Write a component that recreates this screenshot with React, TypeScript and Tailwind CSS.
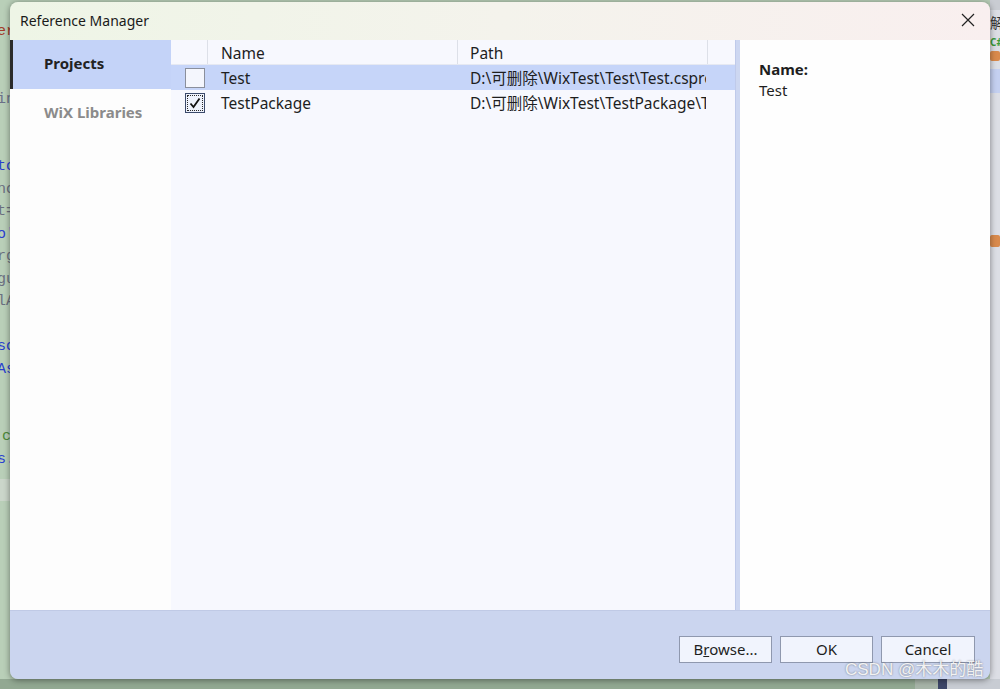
import React from "react";

const codeLines: { t: string; c: string; ml?: string }[] = [
  { t: "er", c: "text-[#a33a2a]" },
  { t: "", c: "" },
  { t: "", c: "" },
  { t: "in", c: "text-[#6b6f88]" },
  { t: "", c: "" },
  { t: "", c: "" },
  { t: "to", c: "text-[#2a3fd0]" },
  { t: "nc", c: "text-[#6b6f80]" },
  { t: "t=", c: "text-[#6b6f80]" },
  { t: "o'", c: "text-[#2a3fd0]" },
  { t: "rg", c: "text-[#6b6f80]" },
  { t: "gu", c: "text-[#6b6f80]" },
  { t: "lA", c: "text-[#6b6f80]" },
  { t: "", c: "" },
  { t: "sc", c: "text-[#2a3fd0]" },
  { t: "As", c: "text-[#2a3fd0]" },
  { t: "", c: "" },
  { t: "", c: "" },
  { t: "c", c: "text-[#4e8a3a]", ml: "ml-[5px]" },
  { t: "s.", c: "text-[#2a3fd0]" },
];

function Checkbox({ checked }: { checked?: boolean }) {
  if (checked) {
    return (
      <div className="w-[20px] h-[20px] border border-[#3b4a6b] bg-[#eef2fc] flex items-center justify-center">
        <div className="w-[16px] h-[16px] border border-dotted border-[#2a2a2a] flex items-center justify-center">
          <svg width="12" height="12" viewBox="0 0 12 12">
            <path d="M1.5 6.5 L4.5 10 L10.5 1.5" fill="none" stroke="#111" strokeWidth="1.8" />
          </svg>
        </div>
      </div>
    );
  }
  return <div className="w-[20px] h-[20px] border border-[#8a8f9c] bg-[#f4f6fd]" />;
}

export default function App() {
  const font = { fontFamily: '"Noto Sans", "Noto Sans CJK SC", sans-serif' };
  return (
    <div className="relative w-[1000px] h-[689px] overflow-hidden bg-[#b7cdb6]" style={font}>
      {/* background editor strip left */}
      <div className="absolute left-0 top-0 w-[10px] h-[689px] overflow-hidden bg-[#b9cfb8]">
        <div className="pt-[21px] font-['Liberation_Mono',monospace] text-[15px] leading-[22.5px] -ml-[3px]">
          {codeLines.map((l, i) => (
            <div key={i} className={`h-[22.5px] whitespace-nowrap ${l.c} ${l.ml ?? ""}`}>
              {l.t || "\u00a0"}
            </div>
          ))}
        </div>
        <div className="mt-[8px] h-[22px] bg-[#cbd6ca]" />
      </div>
      {/* background right strip */}
      <div className="absolute left-[990px] top-0 w-[10px] h-[689px] bg-[#dcdee5] flex flex-col">
        <div className="h-[10px] bg-[#c9ccd2]" />
        <div className="h-[25px] text-[14px] text-[#333] leading-[25px] whitespace-nowrap overflow-hidden">解</div>
        <div className="h-[14px] text-[10px] leading-[14px] text-[#3a9a3a] font-bold overflow-hidden">C#</div>
        <div className="h-[14px] flex items-center"><div className="w-[10px] h-[10px] rounded-[2px] bg-[#d98a4c]" /></div>
        <div className="h-[6px]" />
        <div className="h-[24px] bg-[#c4d0f0]" />
        <div className="h-[140px]" />
        <div className="h-[16px] flex items-center"><div className="w-[10px] h-[12px] rounded-[2px] bg-[#d98a4c]" /></div>
      </div>
      {/* background bottom strip */}
      <div className="absolute left-0 top-[679px] w-[1000px] h-[10px] bg-[#92a892] flex">
        <div className="w-[915px]" />
        <div className="w-[23px] bg-[#a7b4a8]" />
        <div className="w-[9px] bg-[#3d4668]" />
        <div className="flex-1 bg-[#c8ccd3]" />
      </div>

      {/* dialog window */}
      <div className="absolute left-[10px] top-[2px] w-[980px] h-[677px] rounded-[8px] overflow-hidden flex flex-col shadow-[0_1px_6px_rgba(0,0,0,0.45)]">
        <div className="h-[38px] shrink-0 flex items-center justify-between pl-[10px] pr-[15px] bg-gradient-to-r from-[#eef5e6] via-[#f4f3ec] to-[#f9efef]">
          <span className="text-[14px] text-[#1a1a1a] -mt-[2px]">Reference Manager</span>
          <svg width="14" height="14" viewBox="0 0 14 14" className="-mt-[2px]">
            <path d="M1 1 L13 13 M13 1 L1 13" stroke="#222" strokeWidth="1.2" fill="none" />
          </svg>
        </div>
        <div className="flex-1 flex min-h-0">
          {/* left nav */}
          <div className="w-[161px] shrink-0 bg-[#fdfdfd]">
            <div className="h-[49px] bg-[#c4d3f8] border-l-[3px] border-[#2b2b2b] flex items-center pl-[31px] pb-[2px] text-[15px] font-bold text-[#222]">
              Projects
            </div>
            <div className="h-[49px] flex items-center pl-[34px] pb-[2px] text-[15px] font-bold text-[#8b8b8b]">
              WiX Libraries
            </div>
          </div>
          {/* list */}
          <div className="w-[564px] shrink-0 bg-[#f7f8fe] text-[15.5px] text-[#1e1e1e]">
            <div className="h-[25px] flex border-b border-[#e6e9f2]">
              <div className="w-[37px] border-r border-[#dde0e8]" />
              <div className="w-[250px] border-r border-[#dde0e8] pl-[13px] leading-[26px]">Name</div>
              <div className="w-[250px] border-r border-[#dde0e8] pl-[12px] leading-[26px]">Path</div>
              <div className="flex-1" />
            </div>
            <div className="h-[25px] flex items-center bg-[#c6d5f9] w-[564px]">
              <div className="w-[37px] pl-[14px]"><Checkbox /></div>
              <div className="w-[250px] pl-[13px] leading-[22px]">Test</div>
              <div className="w-[248px] pl-[12px] overflow-hidden whitespace-nowrap leading-[22px]">D:\可删除\WixTest\Test\Test.csproj</div>
            </div>
            <div className="h-[25px] flex items-center">
              <div className="w-[37px] pl-[14px]"><Checkbox checked /></div>
              <div className="w-[250px] pl-[13px] leading-[22px]">TestPackage</div>
              <div className="w-[248px] pl-[12px] overflow-hidden whitespace-nowrap leading-[22px]">D:\可删除\WixTest\TestPackage\TestPackage.wixproj</div>
            </div>
          </div>
          {/* splitter */}
          <div className="w-[5px] shrink-0 bg-[#cdd7f1] border-l border-[#bfcaea]" />
          {/* details */}
          <div className="flex-1 bg-[#fefefe] pl-[19px] pt-[19px] text-[15px] text-[#1e1e1e]">
            <div className="font-bold leading-[20px]">Name:</div>
            <div className="leading-[20px] mt-[1px]">Test</div>
          </div>
        </div>
        {/* footer */}
        <div className="h-[69px] shrink-0 bg-[#cbd5ef] border-t border-[#c0cae6] flex justify-end items-start pt-[25px] pr-[15px] gap-[8px] text-[15px] text-[#1e1e1e]">
          <button className="w-[93px] h-[27px] bg-[#f1f4fd] border border-[#8f98ae] leading-[25px]">
            B<span className="underline">r</span>owse...
          </button>
          <button className="w-[93px] h-[27px] bg-[#f1f4fd] border border-[#8f98ae] leading-[25px]">OK</button>
          <button className="w-[94px] h-[27px] bg-[#f1f4fd] border border-[#8f98ae] leading-[25px]">Cancel</button>
        </div>
      </div>

      {/* watermark */}
      <div
        className="absolute left-[845px] top-[658px] text-[17px] leading-[24px] text-[#f2f2f2] whitespace-nowrap [text-shadow:0_0_2px_rgba(0,0,0,0.45)]"
        style={{ fontFamily: '"Liberation Sans", "Noto Sans CJK SC", sans-serif' }}
      >
        CSDN @木木的酷
      </div>
    </div>
  );
}
